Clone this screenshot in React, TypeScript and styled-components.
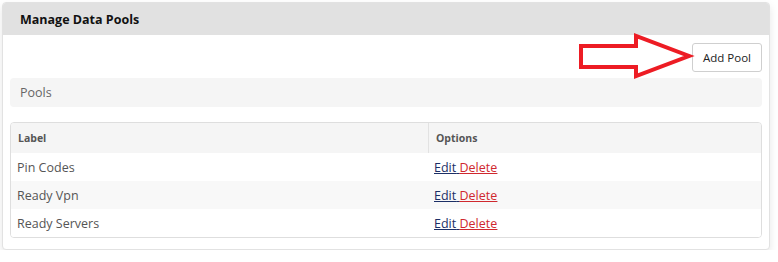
import React from "react";
import styled, { createGlobalStyle } from "styled-components";

const Global = createGlobalStyle`
  html, body { margin: 0; padding: 0; background: #fff; }
  body { font-family: "Open Sans", "Noto Sans", sans-serif; }
`;

const Page = styled.div`
  padding: 2px 8px 0 2px;
`;

const Panel = styled.div`
  position: relative;
  width: 768px;
  border: 1px solid #e2e2e2;
  border-radius: 4px;
  background: #fff;
  box-shadow: 0 4px 9px rgba(0, 0, 0, 0.1);
  box-sizing: border-box;
`;

const PanelHeader = styled.div`
  height: 32px;
  background: #e1e1e1;
  border-radius: 3px 3px 0 0;
  display: flex;
  align-items: center;
  padding-left: 17px;
  font-size: 12.5px;
  font-weight: 700;
  color: #111;
`;

const PanelBody = styled.div`
  padding: 8px 7px 11px 7px;
  display: flex;
  flex-direction: column;
`;

const Toolbar = styled.div`
  display: flex;
  justify-content: flex-end;
  margin-bottom: 6px;
`;

const Button = styled.button`
  width: 70px;
  height: 29px;
  border: 1px solid #cfcfcf;
  border-radius: 3px;
  background: #fff;
  font-family: "Open Sans", sans-serif;
  font-size: 11.5px;
  color: #222;
  padding: 0;
`;

const SectionBar = styled.div`
  height: 29px;
  background: #f5f5f5;
  border-radius: 4px;
  display: flex;
  align-items: center;
  padding-left: 10px;
  font-size: 12.5px;
  color: #666;
  margin-bottom: 15px;
`;

const Table = styled.div`
  border: 1px solid #dedede;
  border-radius: 4px;
  overflow: hidden;
`;

const Row = styled.div<{ $bg: string; $h: number }>`
  display: grid;
  grid-template-columns: 417px 1fr;
  height: ${(p) => p.$h}px;
  background: ${(p) => p.$bg};
`;

const HeadCell = styled.div<{ $divider?: boolean }>`
  display: flex;
  align-items: center;
  padding-left: 7px;
  font-size: 10.5px;
  font-weight: 700;
  color: #555;
  border-left: ${(p) => (p.$divider ? "1px solid #e2e2e2" : "none")};
`;

const Cell = styled.div`
  display: flex;
  align-items: center;
  padding-left: 6px;
  font-size: 12.5px;
  color: #555;
`;

const LinkA = styled.a<{ $c: string }>`
  color: ${(p) => p.$c};
  text-decoration: underline;
  cursor: pointer;
`;

const Links = styled.span`
  color: #1c2f66;
  text-decoration: underline;
`;

const Arrow = styled.svg`
  position: absolute;
  left: 572px;
  top: 30px;
`;

const rows = ["Pin Codes", "Ready Vpn", "Ready Servers"];

export default function App() {
  return (
    <>
      <Global />
      <Page>
        <Panel>
          <PanelHeader>Manage Data Pools</PanelHeader>
          <PanelBody>
            <Toolbar>
              <Button>Add Pool</Button>
            </Toolbar>
            <SectionBar>Pools</SectionBar>
            <Table>
              <Row $bg="#f5f5f5" $h={30}>
                <HeadCell>Label</HeadCell>
                <HeadCell $divider>Options</HeadCell>
              </Row>
              {rows.map((r, i) => (
                <Row key={r} $bg={i % 2 === 1 ? "#f8f8f8" : "#fff"} $h={28}>
                  <Cell>{r}</Cell>
                  <Cell>
                    <Links>
                      <LinkA $c="#1c2f66">Edit</LinkA>{" "}
                      <LinkA $c="#d0282e">Delete</LinkA>
                    </Links>
                  </Cell>
                </Row>
              ))}
            </Table>
          </PanelBody>
          <Arrow width="122" height="50" viewBox="0 0 122 50">
            <polygon
              points="6,13 61,13 61,3 114,23 61,43 61,34 6,34"
              fill="none"
              stroke="#ed1c24"
              strokeWidth="4"
              strokeLinejoin="miter"
            />
          </Arrow>
        </Panel>
      </Page>
    </>
  );
}
